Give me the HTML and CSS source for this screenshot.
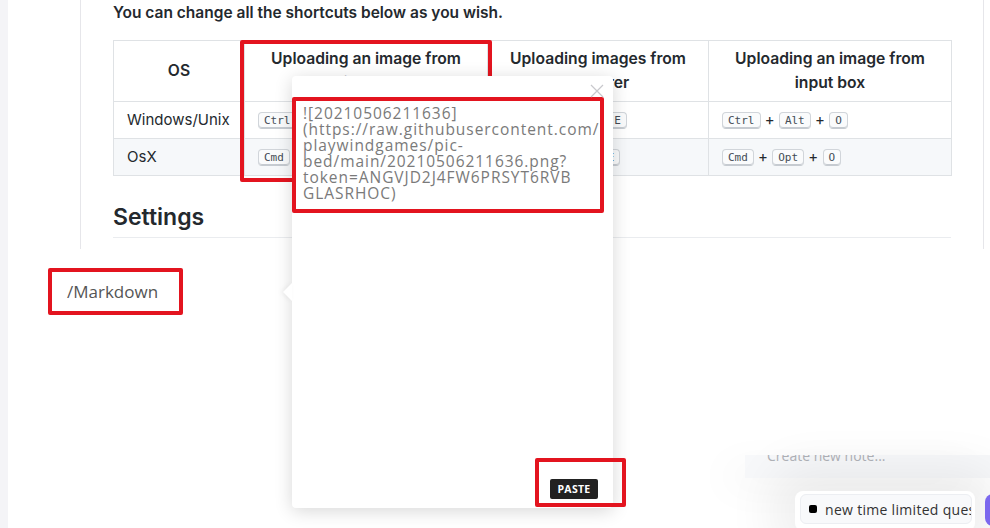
FILE: index.html
```html
<!DOCTYPE html>
<html>
<head>
<meta charset="utf-8">
<link rel="stylesheet" href="styles.css">
</head>
<body>
<div class="page">
  <div class="strip"></div>
  <div class="doc">
    <p class="intro">You can change all the shortcuts below as you wish.</p>
    <table class="keys">
      <colgroup><col class="c1"><col class="c2"><col class="c3"><col class="c4"></colgroup>
      <thead>
        <tr><th>OS</th><th>Uploading an image from clipboard</th><th>Uploading images from explorer</th><th>Uploading an image from input box</th></tr>
      </thead>
      <tbody>
        <tr><td>Windows/Unix</td><td><kbd>Ctrl</kbd> + <kbd>Alt</kbd> + <kbd>V</kbd></td><td><kbd>Ctrl</kbd> + <kbd>Alt</kbd> + <kbd>E</kbd></td><td><kbd>Ctrl</kbd> + <kbd>Alt</kbd> + <kbd>O</kbd></td></tr>
        <tr class="alt"><td>OsX</td><td><kbd>Cmd</kbd> + <kbd>Opt</kbd> + <kbd>V</kbd></td><td><kbd>Cmd</kbd> + <kbd>Opt</kbd> + <kbd>E</kbd></td><td><kbd>Cmd</kbd> + <kbd>Opt</kbd> + <kbd>O</kbd></td></tr>
      </tbody>
    </table>
    <h2 class="settings">Settings</h2>
  </div>
</div>

<div class="anno anno-col"></div>
<div class="anno anno-md"><span>/Markdown</span></div>

<div class="popup">
  <span class="arrow"></span>
  <svg class="close" width="14" height="14" viewBox="0 0 14 14"><path d="M1 1L13 13M13 1L1 13" stroke="#c8c8cc" stroke-width="1.2" fill="none"/></svg>
  <div class="snippet">![20210506211636]<br>(https://raw.githubusercontent.com/<br>playwindgames/pic-<br>bed/main/20210506211636.png?<br>token=ANGVJD2J4FW6PRSYT6RVB<br>GLASRHOC)</div>
  <div class="pop-foot"><button class="paste">PASTE</button></div>
</div>
<div class="anno anno-paste"></div>

<div class="notepad">
  <div class="note-input"><span>Create new note...</span></div>
</div>
<div class="quest">
  <div class="quest-inner"><span class="dot"></span><span class="quest-text">new time limited quest</span></div>
</div>
<div class="purple"></div>
</body>
</html>
```
FILE: styles.css
```css
html, body {
  margin: 0;
  padding: 0;
}
body {
  width: 990px;
  height: 528px;
  overflow: hidden;
  background: #fff;
  position: relative;
  font-family: Inter, "Liberation Sans", Arial, sans-serif;
  color: #24292e;
}
.page {
  display: flex;
  height: 528px;
}
.strip {
  width: 8px;
  background: #f4f4f7;
  flex: none;
}
.doc {
  margin-left: 72px;
  width: 838px;
  height: 249px;
  padding: 0 32px;
  border-left: 1px solid #e6e6ea;
  border-right: 1px solid #e6e6ea;
  flex: none;
}
.intro {
  margin: 1px 0 15px;
  font-size: 15.5px;
  line-height: 24px;
  font-weight: 600;
}
.keys {
  border-collapse: collapse;
  table-layout: fixed;
  width: 838px;
  font-size: 15px;
}
.c1 { width: 131px; }
.c2 { width: 243px; }
.c3 { width: 221px; }
.c4 { width: 243px; }
.keys th, .keys td {
  border: 1px solid #dfe2e5;
  padding: 6px 13px;
  line-height: 24px;
}
.keys th {
  font-weight: 600;
  font-size: 15.7px;
  text-align: center;
}
.keys td {
  text-align: left;
  white-space: nowrap;
}
.keys tr.alt td {
  background: #f6f8fa;
}
kbd {
  display: inline-block;
  font-family: "DejaVu Sans Mono", "Liberation Mono", monospace;
  font-size: 11px;
  line-height: 15px;
  padding: 0 5px;
  color: #444d56;
  background: #fafbfc;
  border: 1px solid #d1d5da;
  border-bottom-color: #c6cbd1;
  border-radius: 4px;
  box-shadow: inset 0 -1px 0 #c6cbd1;
  vertical-align: middle;
}
.settings {
  margin: 26px 0 0;
  padding-bottom: 5px;
  font-size: 23px;
  line-height: 30px;
  font-weight: 600;
  border-bottom: 1px solid #eaecef;
}

.anno {
  position: absolute;
  border: 4px solid #e3141f;
  border-radius: 2px;
  box-sizing: border-box;
}
.anno-col {
  left: 240px;
  top: 40px;
  width: 252px;
  height: 142px;
}
.anno-md {
  left: 48px;
  top: 268px;
  width: 135px;
  height: 47px;
  padding: 11px 0 0 15px;
  font-family: "Open Sans", sans-serif;
  font-size: 17px;
  line-height: 18px;
  color: #555;
}
.anno-paste {
  left: 535px;
  top: 458px;
  width: 91px;
  height: 49px;
}

.popup {
  position: absolute;
  left: 292px;
  top: 76px;
  width: 321px;
  height: 432px;
  background: #fff;
  border-radius: 4px;
  box-shadow: 0 3px 18px rgba(0, 0, 0, 0.16);
  display: flex;
  flex-direction: column;
  box-sizing: border-box;
  padding-top: 21px;
}
.arrow {
  position: absolute;
  left: -9px;
  top: 207px;
  width: 0;
  height: 0;
  border-top: 9px solid transparent;
  border-bottom: 9px solid transparent;
  border-right: 9px solid #fff;
  filter: drop-shadow(-2px 0 2px rgba(0, 0, 0, 0.06));
}
.close {
  position: absolute;
  right: 9px;
  top: 8px;
}
.snippet {
  width: 312px;
  height: 116px;
  box-sizing: border-box;
  border: 4px solid #e3141f;
  border-radius: 2px;
  padding: 4px 0 0 7px;
  font-family: "Open Sans", sans-serif;
  font-size: 15.5px;
  letter-spacing: 0.95px;
  line-height: 16px;
  color: #7a7a7a;
  white-space: nowrap;
  overflow: hidden;
}
.pop-foot {
  margin-top: auto;
  display: flex;
  padding: 0 0 9px 258px;
}
.paste {
  width: 48px;
  height: 20px;
  border: none;
  border-radius: 2px;
  background: #222;
  color: #fff;
  font-family: "Open Sans", sans-serif;
  font-weight: 700;
  font-size: 10.5px;
  letter-spacing: 0.3px;
  padding: 0;
}

.notepad {
  position: absolute;
  left: 745px;
  top: 455px;
  width: 245px;
  height: 23px;
  background: #f7f8fa;
  overflow: hidden;
  box-shadow: -20px 10px 40px rgba(0, 0, 0, 0.04);
}
.note-input span {
  display: block;
  margin: -8px 0 0 22px;
  font-family: "Open Sans", sans-serif;
  font-size: 14px;
  line-height: 18px;
  color: #b0b2b8;
}
.quest {
  position: absolute;
  left: 795px;
  top: 491px;
  width: 180px;
  height: 40px;
  background: #fff;
  border-radius: 8px;
  box-shadow: 0 0 50px 22px rgba(0, 0, 0, 0.07);
  padding: 3px 3px 0 5px;
  box-sizing: border-box;
}
.quest-inner {
  height: 30px;
  width: 172px;
  box-sizing: border-box;
  background: #f8f9fb;
  border: 1px solid #eceef2;
  border-radius: 6px;
  display: flex;
  align-items: center;
  padding-left: 8px;
  overflow: hidden;
}
.dot {
  width: 8px;
  height: 8px;
  border-radius: 2px;
  background: #000;
  flex: none;
  margin-right: 8px;
}
.quest-text {
  font-family: "Open Sans", sans-serif;
  font-size: 14px;
  letter-spacing: 0.3px;
  color: #333;
  white-space: nowrap;
}
.purple {
  position: absolute;
  left: 985px;
  top: 494px;
  width: 30px;
  height: 32px;
  border-radius: 8px;
  background: #7b68ee;
}
```
